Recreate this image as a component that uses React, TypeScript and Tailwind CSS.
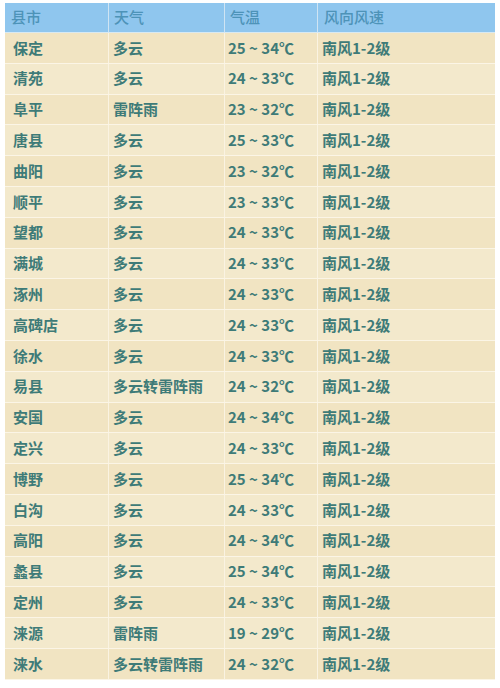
const rows: [string, string, string][] = [
  ["保定", "多云", "25 ~ 34℃"],
  ["清苑", "多云", "24 ~ 33℃"],
  ["阜平", "雷阵雨", "23 ~ 32℃"],
  ["唐县", "多云", "25 ~ 33℃"],
  ["曲阳", "多云", "23 ~ 32℃"],
  ["顺平", "多云", "23 ~ 33℃"],
  ["望都", "多云", "24 ~ 33℃"],
  ["满城", "多云", "24 ~ 33℃"],
  ["涿州", "多云", "24 ~ 33℃"],
  ["高碑店", "多云", "24 ~ 33℃"],
  ["徐水", "多云", "24 ~ 33℃"],
  ["易县", "多云转雷阵雨", "24 ~ 32℃"],
  ["安国", "多云", "24 ~ 34℃"],
  ["定兴", "多云", "24 ~ 33℃"],
  ["博野", "多云", "25 ~ 34℃"],
  ["白沟", "多云", "24 ~ 33℃"],
  ["高阳", "多云", "24 ~ 34℃"],
  ["蠡县", "多云", "25 ~ 34℃"],
  ["定州", "多云", "24 ~ 33℃"],
  ["涞源", "雷阵雨", "19 ~ 29℃"],
  ["涞水", "多云转雷阵雨", "24 ~ 32℃"],
];

const cols = "grid grid-cols-[104px_116px_93px_1fr]";

export default function App() {
  return (
    <div
      className="w-[500px] h-[688px] bg-white pt-[3px] pl-[5px] pr-[5px] overflow-hidden"
      style={{ fontFamily: '"Noto Sans CJK SC", "Noto Sans", sans-serif' }}
    >
      <div className="bg-white">
        {/* header */}
        <div className={`${cols} h-[30px] bg-[#8fc6ee] text-[#4d93b8] text-[15px] font-medium border-b border-[#d8e9f2]`}>
          <div className="flex items-center pl-[6px] border-r border-[#cfe4f3]">县市</div>
          <div className="flex items-center pl-[5px] border-r border-[#cfe4f3]">天气</div>
          <div className="flex items-center pl-[5px] border-r border-[#cfe4f3]">气温</div>
          <div className="flex items-center pl-[6px]">风向风速</div>
        </div>
        {rows.map(([city, weather, temp], i) => (
          <div
            key={city}
            className={`${cols} h-[30.8px] text-[15px] font-bold text-[#3e7b78] border-b border-[#fbf5e6] ${
              i % 2 === 0 ? "bg-[#f1e4c2]" : "bg-[#f3e9cc]"
            }`}
          >
            <div className="flex items-center pl-[8px] border-r border-[#faf3e2]">{city}</div>
            <div className="flex items-center pl-[4px] border-r border-[#faf3e2] font-semibold">{weather}</div>
            <div className="flex items-center pl-[3px] border-r border-[#faf3e2] whitespace-pre">{temp}</div>
            <div className="flex items-center pl-[4px]">南风1-2级</div>
          </div>
        ))}
      </div>
    </div>
  );
}
